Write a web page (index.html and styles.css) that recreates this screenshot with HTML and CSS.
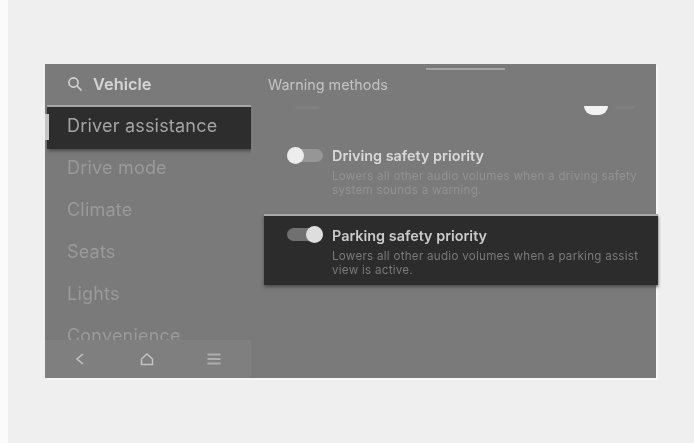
FILE: index.html
```html
<!DOCTYPE html>
<html lang="en">
<head>
<meta charset="utf-8">
<title>Warning methods</title>
<link rel="stylesheet" href="styles.css">
</head>
<body>
<div class="backdrop">
  <div class="screen">
    <aside class="sidebar">
      <div class="search">
        <svg class="search-icon" viewBox="0 0 16 16" width="16" height="16"><circle cx="6.5" cy="6.5" r="4.6"/><path d="M10 10l4.5 4.5"/></svg>
        <span class="search-label">Vehicle</span>
      </div>
      <ul class="menu">
        <li class="menu-item active">Driver assistance</li>
        <li class="menu-item">Drive mode</li>
        <li class="menu-item">Climate</li>
        <li class="menu-item">Seats</li>
        <li class="menu-item">Lights</li>
        <li class="menu-item">Convenience</li>
      </ul>
      <nav class="navbar">
        <svg class="nav-icon" viewBox="0 0 14 14" width="14" height="14"><path d="M10 2L4 7l6 5"/></svg>
        <svg class="nav-icon" viewBox="0 0 16 14" width="16" height="14"><path d="M8 2L13.5 7V12.5H2.5V7Z"/></svg>
        <svg class="nav-icon" viewBox="0 0 14 14" width="14" height="14"><path class="thick" d="M0.5 2.5H13.5M0.5 7H13.5M0.5 11.5H13.5"/></svg>
      </nav>
    </aside>
    <main class="content">
      <div class="handle"></div>
      <h1 class="heading">Warning methods</h1>
      <div class="peek">
        <span class="peek-faint"></span>
        <span class="peek-group"><span class="peek-knob"></span><span class="peek-faint short"></span></span>
      </div>
      <div class="option first">
        <span class="toggle"><span class="thumb"></span></span>
        <div class="option-text">
          <div class="option-title">Driving safety priority</div>
          <div class="option-desc">Lowers all other audio volumes when a driving safety<br>system sounds a warning.</div>
        </div>
      </div>
      <div class="option selected">
        <span class="toggle on"><span class="thumb"></span></span>
        <div class="option-text">
          <div class="option-title">Parking safety priority</div>
          <div class="option-desc">Lowers all other audio volumes when a parking assist<br>view is active.</div>
        </div>
      </div>
    </main>
  </div>
</div>
</body>
</html>
```

FILE: styles.css
```css
* { box-sizing: border-box; }
html, body { margin: 0; height: 100%; }
body {
  width: 694px;
  height: 443px;
  overflow: hidden;
  background: #fbfbfb;
  padding-left: 8px;
  font-family: Inter, "Liberation Sans", sans-serif;
}
.backdrop {
  height: 100%;
  background: #efefef;
  padding: 64px 0 0 37px;
}
.screen {
  width: 611px;
  height: 314px;
  background: #7a7a7a;
  display: flex;
  box-shadow: 2px 2px 0 #f7f7f7;
  filter: blur(0.75px);
}
.sidebar {
  width: 206px;
  height: 314px;
  display: flex;
  flex-direction: column;
  position: relative;
  flex: none;
}
.search {
  height: 40px;
  display: flex;
  align-items: center;
  gap: 10px;
  padding-left: 22px;
  flex: none;
}
.search-icon { fill: none; stroke: #d4d4d4; stroke-width: 1.6; }
.search-label { color: #d4d4d4; font-size: 16.4px; font-weight: 600; }
.menu {
  list-style: none;
  margin: 1px 0 0;
  padding: 0;
  height: 235px;
  overflow: hidden;
  flex: none;
}
.menu-item {
  height: 42px;
  line-height: 38px;
  padding-left: 22px;
  font-size: 18px;
  letter-spacing: 0.2px;
  color: #9a9a9a;
}
.menu-item.active {
  height: 44px;
  margin-left: 2px;
  padding-left: 20px;
  background: #2d2d2d;
  color: #a4a4a4;
  border-top: 2px solid #a6a6a6;
  box-shadow: 1px 2px 3px #4c4c4c;
  position: relative;
}
.menu-item.active::before {
  content: "";
  position: absolute;
  left: -2px;
  top: 7px;
  width: 4px;
  height: 26px;
  background: #c4c4c4;
}
.navbar {
  height: 38px;
  background: #7f7f7f;
  display: flex;
  align-items: center;
  justify-content: space-between;
  padding: 0 30px 0 28px;
  flex: none;
}
.nav-icon { fill: none; stroke: #c4c4c4; stroke-width: 1.5; }
.nav-icon .thick { stroke-width: 2; stroke: #aeaeae; }
.content {
  flex: 1;
  position: relative;
  padding-top: 4px;
}
.handle {
  width: 79px;
  height: 2px;
  background: #a4a4a4;
  margin-left: 175px;
}
.heading {
  margin: 7px 0 0 17px;
  font-size: 14.4px;
  line-height: 16px;
  font-weight: 400;
  color: #c4c4c4;
}
.peek {
  height: 9px;
  margin-top: 13px;
  display: flex;
  justify-content: space-between;
  padding: 0 21px 0 44px;
}
.peek-group { display: flex; gap: 7px; }
.peek-faint {
  display: block;
  width: 25px;
  height: 3px;
  background: #808080;
  border-radius: 0 0 8px 8px;
}
.peek-faint.short { width: 20px; }
.peek-knob {
  display: block;
  width: 24px;
  height: 9px;
  background: #f2f2f2;
  border-radius: 0 0 12px 12px;
}
.option {
  display: flex;
  align-items: flex-start;
  gap: 9px;
  margin-left: 13px;
  margin-right: -2px;
  padding: 0 8px 0 23px;
}
.first {
  margin-top: 22px;
  height: 77px;
  padding-top: 9px;
}
.selected {
  height: 71px;
  background: #2c2c2c;
  border-top: 2px solid #a8a8a8;
  box-shadow: 0 2px 3px #4c4c4c;
  padding-top: 10px;
}
.toggle {
  display: block;
  width: 36px;
  height: 13px;
  margin-top: 3px;
  background: #969696;
  border-radius: 7px;
  position: relative;
  flex: none;
}
.selected .toggle { background: #707070; margin-top: 2px; }
.thumb {
  position: absolute;
  top: -2px;
  left: 0;
  width: 17px;
  height: 17px;
  border-radius: 50%;
  background: #ececec;
}
.toggle.on .thumb { left: auto; right: 0; background: #dedede; }
.option-text { min-width: 0; }
.option-title {
  font-size: 14.4px;
  line-height: 19px;
  font-weight: 600;
  color: #d8d8d8;
  white-space: nowrap;
}
.selected .option-title { color: #cacaca; }
.option-desc {
  margin-top: 4px;
  font-size: 11.6px;
  letter-spacing: 0.27px;
  line-height: 14px;
  color: #929292;
  white-space: nowrap;
}
.selected .option-desc { color: #7a7a7a; }
```
